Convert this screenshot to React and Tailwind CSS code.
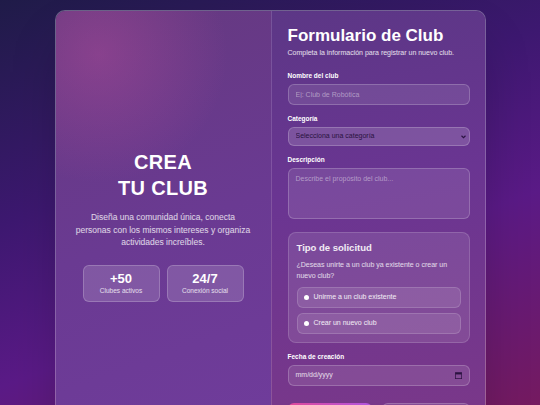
import { useState } from "react";

const App = () => {
  const [tipo, setTipo] = useState("");

  return (
    <div
      className="min-h-screen w-full bg-[linear-gradient(160deg,#1f1b48_0%,#3d1870_35%,#5a1a86_60%,#7a1a58_100%)] pt-[10px] text-white"
      style={{ fontFamily: '"Liberation Sans", Arial, sans-serif' }}
    >
      <div className="mx-auto flex w-[431px] overflow-hidden rounded-t-[10px] border border-white/20 bg-white/15 shadow-2xl">
        {/* left side */}
        <div className="flex w-[215px] shrink-0 flex-col items-center bg-[radial-gradient(circle_at_20%_10%,rgba(200,80,160,0.35)_0%,rgba(0,0,0,0)_30%),linear-gradient(160deg,#65397f_0%,#6a3a92_50%,#703c9c_100%)] px-[16px] pt-[138px] pb-[140px] text-center">
          <h1 className="text-[20px] font-bold leading-[26px] tracking-[0.3px]">
            CREA
            <br />
            TU CLUB
          </h1>
          <p className="mt-[10px] text-[8.5px] leading-[12.5px] text-white/80">
            Diseña una comunidad única, conecta
            <br />
            personas con los mismos intereses y organiza
            <br />
            actividades increíbles.
          </p>
          <div className="mt-[16px] flex gap-[7px]">
            <div className="flex h-[37px] w-[77px] flex-col items-center justify-center rounded-[6px] border border-white/20 bg-white/15">
              <span className="text-[13px] font-bold leading-[15px]">+50</span>
              <span className="text-[6.5px] leading-[9px] text-white/80">Clubes activos</span>
            </div>
            <div className="flex h-[37px] w-[77px] flex-col items-center justify-center rounded-[6px] border border-white/20 bg-white/15">
              <span className="text-[13px] font-bold leading-[15px]">24/7</span>
              <span className="text-[6.5px] leading-[9px] text-white/80">Conexión social</span>
            </div>
          </div>
        </div>

        {/* right side: form */}
        <form className="flex flex-1 flex-col border-l border-white/15 bg-[linear-gradient(170deg,#5c3786_0%,#6a3592_40%,#7c3888_100%)] pl-[16px] pr-[15px] pt-[14px] pb-[20px]">
          <h2 className="text-[17px] font-bold leading-[22px]">Formulario de Club</h2>
          <p className="mt-[1px] text-[7px] leading-[10px] text-white/85">
            Completa la información para registrar un nuevo club.
          </p>

          <label className="mt-[13px] text-[6.5px] font-bold leading-[10px]">Nombre del club</label>
          <input
            type="text"
            placeholder="Ej: Club de Robótica"
            className="mt-[3px] h-[21px] w-full rounded-[6px] border border-white/20 bg-white/10 px-[7px] text-[7px] text-white outline-none placeholder:text-white/45"
          />

          <label className="mt-[9px] text-[6.5px] font-bold leading-[10px]">Categoría</label>
          <div className="relative mt-[3px]">
            <select
              defaultValue=""
              className="block h-[19px] w-full appearance-none rounded-[6px] border border-white/20 bg-white/15 px-[7px] text-[7px] text-[#2a1240] outline-none"
            >
              <option value="">Selecciona una categoría</option>
              <option>Tecnología</option>
              <option>Deportes</option>
              <option>Arte</option>
            </select>
            <svg
              className="pointer-events-none absolute right-[4px] top-[8px]"
              width="5"
              height="4"
              viewBox="0 0 10 8"
            >
              <path d="M1 1.5 L5 5.5 L9 1.5" fill="none" stroke="#2a1240" strokeWidth="2.2" />
            </svg>
          </div>

          <label className="mt-[9px] text-[6.5px] font-bold leading-[10px]">Descripción</label>
          <textarea
            placeholder="Describe el propósito del club..."
            className="mt-[3px] h-[51px] w-full resize-none rounded-[6px] border border-white/20 bg-white/10 px-[7px] py-[5px] text-[7px] text-white outline-none placeholder:text-white/45"
          />

          <div className="mt-[13px] rounded-[8px] border border-white/15 bg-white/10 px-[8px] pt-[9px] pb-[8px]">
            <h3 className="text-[9.5px] font-bold leading-[12px] text-white/90">Tipo de solicitud</h3>
            <p className="mt-[6px] text-[7px] leading-[10.5px] text-white/80">
              ¿Deseas unirte a un club ya existente o crear un nuevo club?
            </p>
            <div className="mt-[6px] flex flex-col gap-[5px]">
              {[
                ["unirme", "Unirme a un club existente"],
                ["crear", "Crear un nuevo club"],
              ].map(([value, text]) => (
                <label
                  key={value}
                  onClick={() => setTipo(value)}
                  className="flex h-[21px] cursor-pointer items-center gap-[5px] rounded-[6px] border border-white/15 bg-white/10 px-[6px] text-[7px] text-white/90"
                >
                  <span
                    className={
                      tipo === value
                        ? "h-[5px] w-[5px] rounded-full bg-pink-300"
                        : "h-[5px] w-[5px] rounded-full bg-white"
                    }
                  />
                  {text}
                </label>
              ))}
            </div>
          </div>

          <label className="mt-[9px] text-[6.5px] font-bold leading-[10px]">Fecha de creación</label>
          <div className="mt-[3px] flex h-[21px] w-full items-center justify-between rounded-[6px] border border-white/20 bg-white/10 px-[7px] text-[7px] text-white/80">
            <span>mm/dd/yyyy</span>
            <svg width="7" height="7" viewBox="0 0 10 10">
              <rect x="0.5" y="1" width="9" height="8.5" fill="none" stroke="#2a1240" strokeWidth="1" />
              <rect x="0.5" y="1" width="9" height="2.5" fill="#2a1240" />
            </svg>
          </div>

          <div className="mt-[17px] flex gap-[10px]">
            <button
              type="submit"
              className="h-[24px] w-[84px] rounded-[6px] bg-[linear-gradient(90deg,#e0489a,#b055e0)] text-[7.5px] font-bold"
            >
              Crear club
            </button>
            <button
              type="button"
              className="h-[24px] flex-1 rounded-[6px] border border-white/20 bg-white/10 text-[7.5px]"
            >
              Cancelar
            </button>
          </div>
        </form>
      </div>
    </div>
  );
};

export default App;
